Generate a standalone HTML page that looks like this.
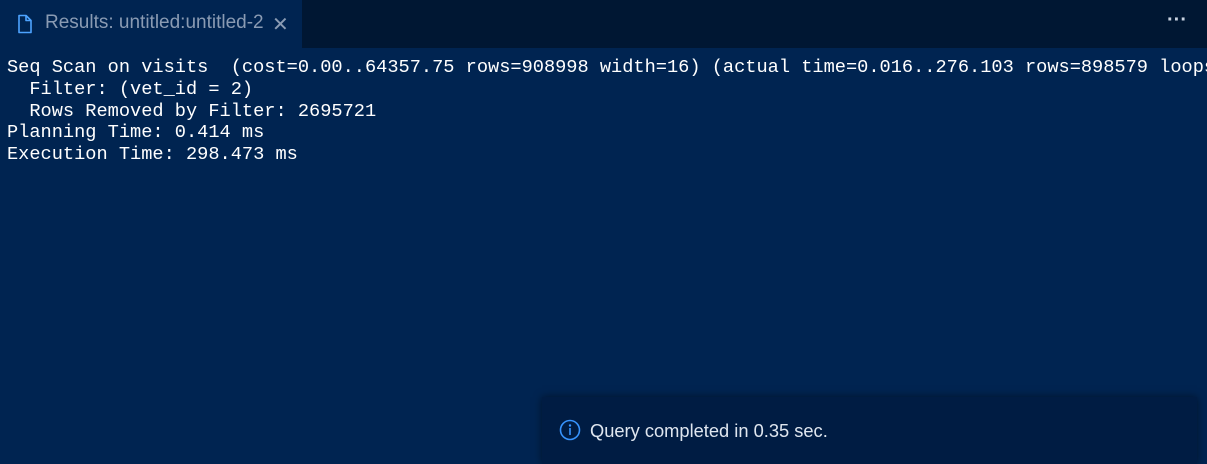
<!DOCTYPE html>
<html><head><style>
html,body{margin:0;width:1207px;height:464px;overflow:hidden;background:#002451;}
.bar{position:absolute;left:0;top:0;width:1207px;height:48px;background:#001733;}
.tab{position:absolute;left:0;top:0;width:302px;height:48px;background:#002451;}
.tabt{position:absolute;left:45px;top:12px;font:19px "Liberation Sans",sans-serif;color:#8a9bb3;white-space:nowrap;}
.x{position:absolute;left:272px;top:12px;font:20px "Liberation Sans",sans-serif;color:#8a9bb3;}
.dots{position:absolute;left:1167px;top:9px;color:#c8d2e0;font:bold 20px "Liberation Sans",sans-serif;}
pre{position:absolute;left:7px;top:57px;margin:0;font:18.65px/21.8px "Liberation Mono",monospace;color:#ffffff;white-space:pre;}
.toast{position:absolute;left:542px;top:397px;width:655px;height:67px;background:#001c43;box-shadow:0 0 8px rgba(0,0,0,.5);}
.tt{position:absolute;left:48px;top:23px;font:18.3px "Liberation Sans",sans-serif;color:#dfe6ef;}
</style></head><body>
<div class="bar"></div>
<div class="tab">
<svg style="position:absolute;left:17px;top:14px" width="16" height="20" viewBox="0 0 16 20"><path d="M2 1.5h7l5 5v12H2z M9 1.5v5h5" fill="none" stroke="#4da3ff" stroke-width="1.6" stroke-linejoin="round"/></svg>
<div class="tabt">Results: untitled:untitled-2</div>
<div class="x">✕</div>
</div>
<div class="dots">···</div>
<pre>Seq Scan on visits  (cost=0.00..64357.75 rows=908998 width=16) (actual time=0.016..276.103 rows=898579 loops=1)
  Filter: (vet_id = 2)
  Rows Removed by Filter: 2695721
Planning Time: 0.414 ms
Execution Time: 298.473 ms</pre>
<div class="toast">
<svg style="position:absolute;left:17px;top:22px" width="22" height="22" viewBox="0 0 22 22"><circle cx="11" cy="11" r="9.5" fill="none" stroke="#3794ff" stroke-width="1.6"/><circle cx="11" cy="6.5" r="1.2" fill="#3794ff"/><rect x="10.2" y="9" width="1.6" height="7" fill="#3794ff"/></svg>
<div class="tt">Query completed in 0.35 sec.</div>
</div>
</body></html>
